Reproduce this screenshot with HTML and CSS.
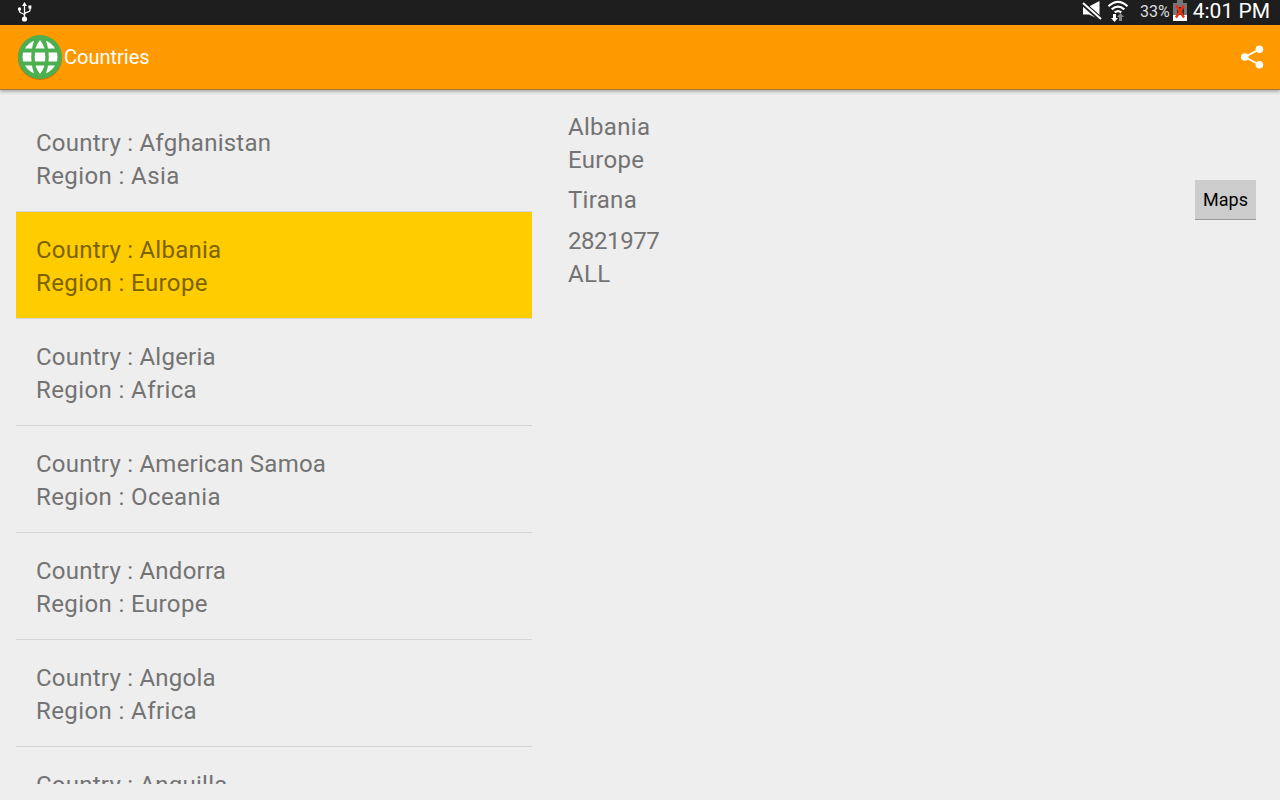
FILE: index.html
```
<!DOCTYPE html>
<html lang="en">
<head>
<meta charset="utf-8">
<title>Countries</title>
<link rel="stylesheet" href="styles.css">
</head>
<body>
<div class="screen">
  <div class="status">
    <svg class="usb" width="16" height="22" viewBox="0 0 16 22" fill="none" stroke="#fff" stroke-width="1.3"><path d="M7.500 5v13M2.500 9v2.500c0 2 5 1.500 5 4M13 7v3.500c0 2-5.500 1.500-5.500 4"/><path d="M7.500 2l2.500 4H5zM11.400 5.500h3v3h-3z" fill="#fff" stroke="none"/><circle cx="2.500" cy="9" r="1.700" fill="#fff" stroke="none"/><circle cx="7.500" cy="19" r="2.600" fill="#fff" stroke="none"/></svg>
    <div class="status-right">
      <svg class="mute" width="22" height="22" viewBox="0 0 22 22"><path d="M2 6.500h6L18.500 1v18.500L8 14.500H2z" fill="#fff"/><path d="M1 2.500l19 17" stroke="#1e1e1e" stroke-width="5"/><path d="M2 3l18 16" stroke="#fff" stroke-width="2"/></svg>
      <svg class="wifi" width="22" height="24" viewBox="0 0 22 24"><path d="M1.500 7.200Q11-1.500 20.500 7.200M4.700 10.400q6.300-5.600 12.600 0M7.700 13.400q3.300-2.600 6.600 0" fill="none" stroke="#fff" stroke-width="2.200"/><path d="M6 15h3v4h2l-3.500 4L4 19h2z" fill="#fff"/><path d="M12 22h3v-4h2l-3.500-4-3.500 4h2z" fill="#858585"/></svg>
      <span class="percent">33%</span>
      <svg class="battery" width="14" height="21" viewBox="0 0 14 21"><path d="M4 0h6v3h4v18H0V3h4z" fill="#777"/><path d="M0 15h14v6H0z" fill="#fff"/><path d="M4 7h7v8H4z" fill="#333"/><path d="M3 5.500l8 12M11 5.500l-8 12" stroke="#f03010" stroke-width="2.400"/></svg>
      <span class="clock">4:01 PM</span>
    </div>
  </div>
  <div class="bar">
    <svg class="globe" width="48" height="48" viewBox="0 0 48 48"><circle cx="24" cy="25" r="22" fill="#000" opacity=".22"/><circle cx="24" cy="24" r="22" fill="#4caf50"/><g fill="#fff"><path d="M24 7q3 3.500 4.500 8.500h-9q1.500-5 4.500-8.500zM24 41q3-3.500 4.500-8.500h-9q1.500 5 4.500 8.500zM18 7.700q-5.500 2-9 7.800h7q.5-3.500 2-7.800zM30 7.700q5.500 2 9 7.800h-7q-.5-3.500-2-7.800zM18 40.300q-5.500-2-9-7.800h7q.5 3.500 2 7.800zM30 40.300q5.500-2 9-7.800h-7q-.5 3.500-2 7.800z"/><path d="M19 19.500h10q.6 4.500 0 9H19q-.6-4.500 0-9zM7 19.500h8.500q-.6 4.500 0 9H7q-1-4.500 0-9zM41 19.500h-8.500q.6 4.500 0 9H41q1-4.500 0-9z"/></g></svg>
    <span class="title">Countries</span>
    <svg class="share" width="24" height="26" viewBox="0 0 24 26"><path d="M19.500 5.300L4.800 13l14.700 7.700" fill="none" stroke="#fff" stroke-width="1.800"/><g fill="#fff"><circle cx="19.400" cy="5.300" r="3.800"/><circle cx="4.800" cy="13" r="3.800"/><circle cx="19.400" cy="20.700" r="3.800"/></g></svg>
  </div>
  <div class="content">
    <ul class="list">
      <li class="row"><div class="country">Country : Afghanistan</div><div class="region">Region : Asia</div></li>
      <li class="row selected"><div class="country">Country : Albania</div><div class="region">Region : Europe</div></li>
      <li class="row"><div class="country">Country : Algeria</div><div class="region">Region : Africa</div></li>
      <li class="row"><div class="country">Country : American Samoa</div><div class="region">Region : Oceania</div></li>
      <li class="row"><div class="country">Country : Andorra</div><div class="region">Region : Europe</div></li>
      <li class="row"><div class="country">Country : Angola</div><div class="region">Region : Africa</div></li>
      <li class="row"><div class="country">Country : Anguilla</div></li>
    </ul>
    <div class="detail">
      <div>Albania</div>
      <div>Europe</div>
      <div class="capital"><span>Tirana</span><button class="maps">Maps</button></div>
      <div class="population">2821977</div>
      <div>ALL</div>
    </div>
  </div>
</div>
</body>
</html>
```
FILE: styles.css
```
* { box-sizing: border-box; }
body { margin: 0; font-family: Roboto, sans-serif; }
.screen { width: 1280px; height: 800px; background: #eee; display: flex; flex-direction: column; overflow: hidden; }
.status { height: 25px; flex: none; background: #1e1e1e; color: #fff; display: flex; justify-content: space-between; align-items: flex-start; padding: 0 10px 0 17px; }
.status-right { display: flex; }
.mute { margin-right: 4px; }
.wifi { margin-right: 11px; margin-top: -1px; }
.percent { font-size: 16px; line-height: 24px; margin-right: 3px; color: #ddd; }
.battery { margin-right: 6px; }
.clock { font-size: 21px; line-height: 23px; }
.bar { height: 65px; flex: none; background: #ff9900; border-bottom: 1px solid #a77a3a; box-shadow: 0 1px 4px rgba(0,0,0,.4); display: flex; align-items: center; padding: 0 16px; position: relative; }
.title { color: #fff; font-size: 20px; flex: 1; }
.content { flex: 1; min-height: 0; display: flex; padding: 15px 24px 16px 16px; font-size: 24px; line-height: 33px; color: #737373; }
.list { width: 516px; margin: 0 36px 0 0; padding: 0; list-style: none; overflow: hidden; }
.row { height: 107px; padding: 22px 20px 0; border-bottom: 1px solid #d5d5d5; }
.country { letter-spacing: .24px; }
.region { letter-spacing: .4px; }
.selected { background: #ffcc00; color: #7b6200; }
.detail { flex: 1; padding-top: 6px; letter-spacing: .3px; }
.capital { display: flex; justify-content: space-between; align-items: center; height: 48px; padding-bottom: 2px; }
.population { letter-spacing: -.45px; }
.maps { width: 61px; height: 40px; margin: 0; padding: 0; border: 0; border-bottom: 1px solid #999; background: #ccc; font: 18px Roboto, sans-serif; color: #000; }
```
